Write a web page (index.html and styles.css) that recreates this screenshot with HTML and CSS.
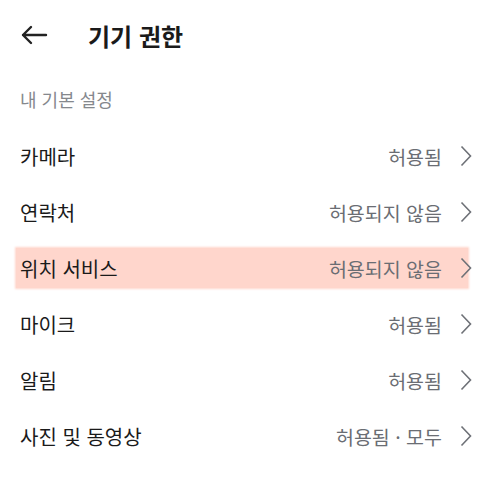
FILE: index.html
```html
<!DOCTYPE html>
<html lang="ko">
<head>
<meta charset="utf-8">
<link rel="stylesheet" href="styles.css">
</head>
<body>
<header class="top">
  <svg class="back" width="28" height="20" viewBox="0 0 28 20"><path d="M26 10H3M11 2L3 10l8 8" fill="none" stroke="#222" stroke-width="2.4" stroke-linecap="round" stroke-linejoin="round"/></svg>
  <h1 class="title">기기 권한</h1>
</header>
<div class="section">내 기본 설정</div>
<ul class="list">
  <li class="row"><span class="label">카메라</span><span class="value">허용됨</span><svg class="chev" width="12" height="22" viewBox="0 0 12 22"><path d="M1.5 1.5L10.5 11 1.5 20.5" fill="none" stroke="#6e7177" stroke-width="1.6"/></svg></li>
  <li class="row"><span class="label">연락처</span><span class="value">허용되지 않음</span><svg class="chev" width="12" height="22" viewBox="0 0 12 22"><path d="M1.5 1.5L10.5 11 1.5 20.5" fill="none" stroke="#6e7177" stroke-width="1.6"/></svg></li>
  <li class="row hl"><span class="label">위치 서비스</span><span class="value">허용되지 않음</span><svg class="chev" width="12" height="22" viewBox="0 0 12 22"><path d="M1.5 1.5L10.5 11 1.5 20.5" fill="none" stroke="#6e7177" stroke-width="1.6"/></svg></li>
  <li class="row"><span class="label">마이크</span><span class="value">허용됨</span><svg class="chev" width="12" height="22" viewBox="0 0 12 22"><path d="M1.5 1.5L10.5 11 1.5 20.5" fill="none" stroke="#6e7177" stroke-width="1.6"/></svg></li>
  <li class="row"><span class="label">알림</span><span class="value">허용됨</span><svg class="chev" width="12" height="22" viewBox="0 0 12 22"><path d="M1.5 1.5L10.5 11 1.5 20.5" fill="none" stroke="#6e7177" stroke-width="1.6"/></svg></li>
  <li class="row"><span class="label">사진 및 동영상</span><span class="value">허용됨 · 모두</span><svg class="chev" width="12" height="22" viewBox="0 0 12 22"><path d="M1.5 1.5L10.5 11 1.5 20.5" fill="none" stroke="#6e7177" stroke-width="1.6"/></svg></li>
</ul>
</body>
</html>
```
FILE: styles.css
```css
* { box-sizing: border-box; }
body {
  margin: 0;
  background: #fff;
  font-family: "Noto Sans CJK KR", "Noto Sans", sans-serif;
  color: #1c1c1e;
}
.top {
  display: flex;
  align-items: center;
  height: 70px;
  padding-left: 20px;
}
.back { display: block; }
.title {
  margin: 0 0 0 40px;
  font-size: 24px;
  font-weight: 700;
  color: #1a1a1a;
}
.section {
  padding: 16px 20px 0;
  height: 58px;
  font-size: 18px;
  line-height: 26px;
  color: #85888d;
}
.list {
  list-style: none;
  margin: 0;
  padding: 0 32px 0 16px;
}
.row {
  display: flex;
  align-items: center;
  height: 56px;
  padding: 0 0 0 4px;
}
.row.hl {
  background: #ffd6cc;
  height: 40px;
  margin: 8px 0;
  box-shadow: 0 0 2px 1px #ffd6cc;
}
.label {
  flex: 1;
  font-size: 20px;
  color: #1a1a1a;
}
.value {
  font-size: 19.5px;
  color: #6a6d73;
  margin-right: 18px;
}
.chev { display: block; margin-right: -4px; }
```
